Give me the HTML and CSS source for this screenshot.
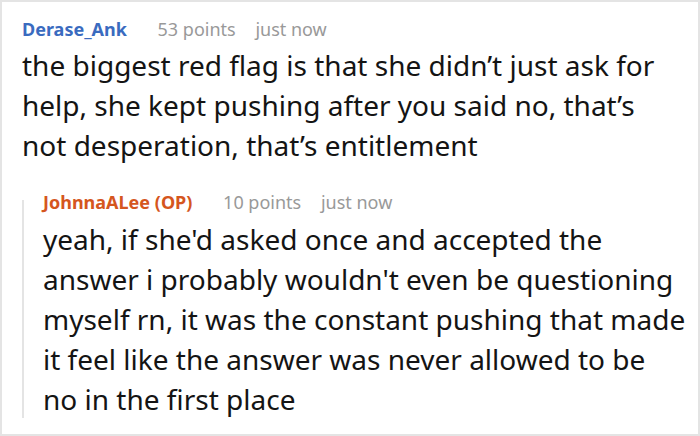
FILE: index.html
```html
<!DOCTYPE html>
<html lang="en">
<head>
  <meta charset="UTF-8" />
  <title>Comment</title>
  <link rel="stylesheet" href="styles.css">
</head>
<body>
  <div class="thread">
    <!-- top level comment -->
    <div class="comment">
      <div class="meta">
        <span class="author">Derase_Ank</span>
        <span class="points">53 points</span>
        <span class="time">just now</span>
      </div>
      <p class="text">the biggest red flag is that she didn’t just ask for help, she kept pushing after you said no, that’s<br>not desperation, that’s entitlement</p>
    </div>

    <!-- reply from OP -->
    <div class="reply">
      <div class="meta">
        <span class="author op">JohnnaALee (OP)</span>
        <span class="points">10 points</span>
        <span class="time">just now</span>
      </div>
      <p class="text">yeah, if she'd asked once and accepted the answer i probably wouldn't even be questioning myself rn, it was the constant pushing that made it feel like the answer was never allowed to be<br>no in the first place</p>
    </div>
  </div>
</body>
</html>
```

FILE: styles.css
```css
/* page */
body {
  margin: 0;
  padding: 0;
  font-family: 'Noto Sans', 'Open Sans', sans-serif;
  background-color: #fff;
}

.thread {
  box-sizing: border-box;
  width: 700px;
  height: 436px;
  border: 2px solid #e4e4e4;
  padding: 14px 4px 0 20px;
}

/* name / points / time row */
.meta {
  font-size: 18px;
  line-height: 26px;
}
.author {
  color: #3a6bbf;
  font-weight: 700;
  margin-right: 26px;
}
.author.op {
  color: #d5561e;
}
.points {
  color: #999;
  margin-right: 15px;
}
.time {
  color: #999;
}

/* comment body */
.text {
  margin: 3px 0 0 0;
  color: #141414;
  font-size: 28px;
  line-height: 40px;
}

/* reply with left rule */
.reply {
  position: relative;
  margin-top: 24px;
  padding-left: 21px;
}
.reply::before {
  content: "";
  position: absolute;
  left: 0;
  top: 11px;
  bottom: 1px;
  width: 2px;
  background-color: #e4e4e4;
}
.reply .text {
  margin-top: 4px;
}
```
